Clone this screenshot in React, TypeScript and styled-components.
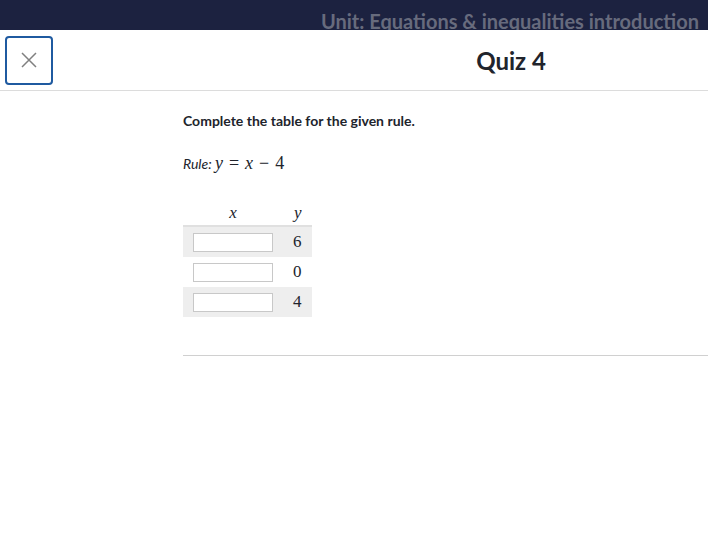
import styled, { createGlobalStyle } from 'styled-components'

const GlobalStyle = createGlobalStyle`
  html, body {
    margin: 0;
    padding: 0;
    background: #ffffff;
    overflow: hidden;
  }
  body {
    font-family: Lato, 'Noto Sans', sans-serif;
    color: #21242c;
  }
`

const Page = styled('div')`
  width: 708px;
  height: 556px;
  overflow: hidden;
  background: #fff;
`

const UnitBar = styled('div')`
  height: 30px;
  background: #1c2240;
  overflow: hidden;
  display: flex;
  justify-content: space-between;
  align-items: flex-start;
`

const UnitText = styled('span')<{ $offset?: number }>`
  flex-shrink: 0;
  font-size: 20px;
  font-weight: 700;
  color: #676b7d;
  line-height: 1;
  padding-top: 11px;
  white-space: nowrap;
  margin-left: ${p => p.$offset ?? 0}px;
  margin-right: ${p => (p.$offset ? 0 : 9)}px;
`

const TopBar = styled('div')`
  display: grid;
  grid-template-columns: 183px 656px;
  height: 60px;
  border-bottom: 1px solid #dcdcdc;
  align-items: center;
`

const CloseButton = styled('button')`
  margin-left: 5px;
  width: 48px;
  height: 49px;
  border: 2px solid #1f5aa0;
  border-radius: 4px;
  background: #fff;
  display: flex;
  align-items: center;
  justify-content: center;
  padding: 0;
`

const Title = styled('h1')`
  margin: 0;
  text-align: center;
  font-size: 24px;
  font-weight: 700;
  color: #21242c;
`

const Content = styled('div')`
  padding: 20px 0 0 183px;
  width: 656px;
`

const Prompt = styled('p')`
  margin: 0;
  font-size: 14px;
  font-weight: 700;
  line-height: 20px;
`

const Rule = styled('p')`
  margin: 22px 0 0;
  font-size: 14px;
  line-height: 20px;
`

const RuleLabel = styled('i')`
  font-style: italic;
`

const MathText = styled('span')`
  font-family: 'Liberation Serif', 'DejaVu Serif', serif;
  font-size: 18px;
`

const Var = styled('i')`
  font-style: italic;
`

const Op = styled('span')`
  padding: 0 6px;
`

const Table = styled('table')`
  margin-top: 29px;
  border-collapse: collapse;
  font-family: 'Liberation Serif', 'DejaVu Serif', serif;
  font-size: 17px;
`

const HeadCell = styled('th')<{ $align: string }>`
  font-weight: 400;
  font-style: italic;
  height: 22px;
  padding: 0 10px 0;
  text-align: ${p => p.$align};
  border-bottom: 2px solid #e0e0e0;
  vertical-align: top;
`

const Row = styled('tr')<{ $shaded: boolean }>`
  background: ${p => (p.$shaded ? '#eeeeee' : '#ffffff')};
`

const Cell = styled('td')`
  height: 30px;
  padding: 0 10px;
  text-align: right;
  vertical-align: middle;
`

const Input = styled('input')`
  display: block;
  width: 80px;
  height: 19px;
  box-sizing: border-box;
  border: 1px solid #c8c8c8;
  background: #fff;
  margin: 0;
`

const Divider = styled('hr')`
  margin: 38px 0 0;
  border: none;
  border-top: 1px solid #d0d0d0;
  width: 656px;
`

const rows = [6, 0, 4]

export default function App() {
  return (
    <Page>
      <GlobalStyle />
      <UnitBar>
        <UnitText $offset={-63}>Course</UnitText>
        <UnitText>Unit: Equations &amp; inequalities introduction</UnitText>
      </UnitBar>
      <TopBar>
        <CloseButton aria-label="Close">
          <svg width="16" height="16" viewBox="0 0 16 16">
            <path d="M1 1 L15 15 M15 1 L1 15" stroke="#808080" strokeWidth="1.5" fill="none" />
          </svg>
        </CloseButton>
        <Title>Quiz 4</Title>
      </TopBar>
      <Content>
        <Prompt>Complete the table for the given rule.</Prompt>
        <Rule>
          <RuleLabel>Rule: </RuleLabel>
          <MathText>
            <Var>y</Var>
            <Op>=</Op>
            <Var>x</Var>
            <Op>−</Op>4
          </MathText>
        </Rule>
        <Table>
          <thead>
            <tr>
              <HeadCell $align="center">x</HeadCell>
              <HeadCell $align="right">y</HeadCell>
            </tr>
          </thead>
          <tbody>
            {rows.map((v, i) => (
              <Row key={i} $shaded={i % 2 === 0}>
                <Cell>
                  <Input type="text" />
                </Cell>
                <Cell>{v}</Cell>
              </Row>
            ))}
          </tbody>
        </Table>
        <Divider />
      </Content>
    </Page>
  )
}
